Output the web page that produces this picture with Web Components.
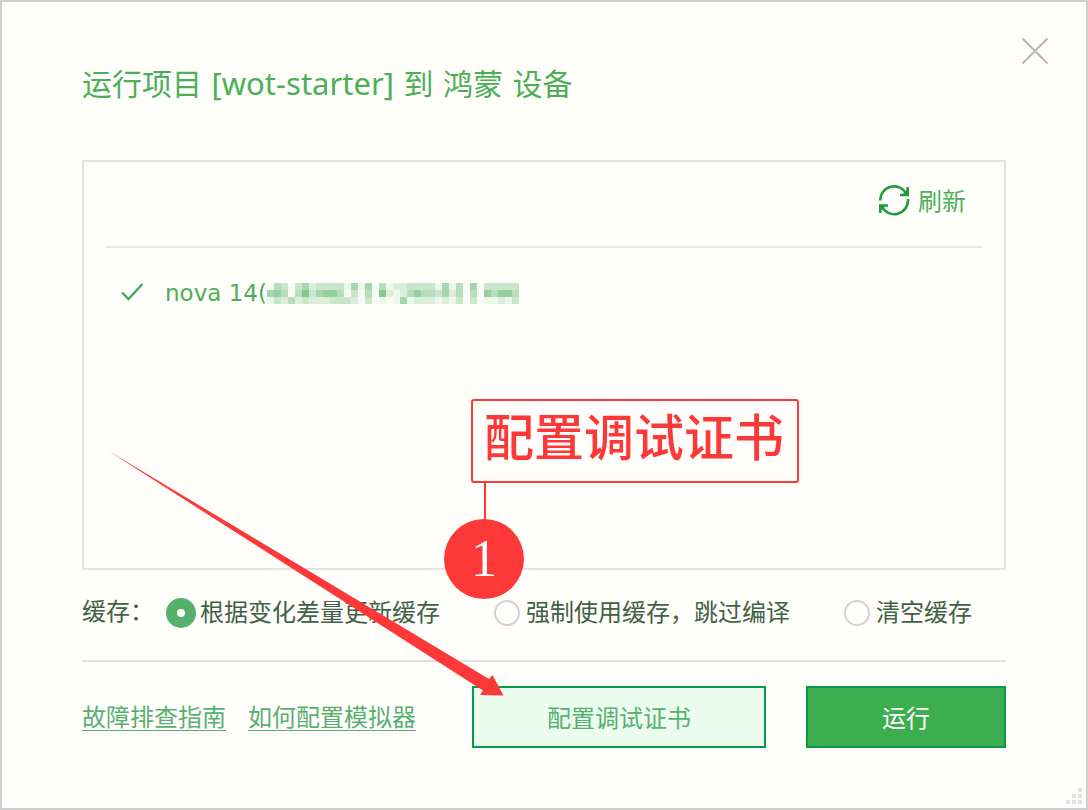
<!DOCTYPE html>
<html lang="zh-CN">
<head>
<meta charset="utf-8">
<title>运行项目</title>
<style>
  body {
    margin: 0;
    font-family: "DejaVu Sans", "Noto Sans CJK SC", sans-serif;
    font-size: 24px;
    color: #3f6145;
    --bg: #fffefa;
    --green: #4caf58;
    --link: #57b070;
    --line: #e3e3e6;
    --mark: #fc3938;
  }
  .name { font-family: "Noto Sans", sans-serif; font-size: 31px; }
</style>
</head>
<body>
<run-dialog>
  <span slot="title">运行项目 <span class="name">[wot-starter]</span> 到 鸿蒙 设备</span>
  <device-panel>
    <device-item>nova 14(</device-item>
  </device-panel>
  <cache-options></cache-options>
  <dialog-footer></dialog-footer>
</run-dialog>

<script>
const define = (name, html, setup) => {
  customElements.define(name, class extends HTMLElement {
    constructor() {
      super();
      const root = this.attachShadow({ mode: "open" });
      const template = document.createElement("template");
      template.innerHTML = html;
      root.append(template.content.cloneNode(true));
      if (setup) setup(root);
    }
  });
};

define("run-dialog", `
  <style>
    :host { display: flex; flex-direction: column; position: relative; box-sizing: border-box;
      min-height: 100vh; border: 2px solid #cfcfcf; background: var(--bg); overflow: hidden; }
    header { display: flex; justify-content: space-between; align-items: flex-start; padding: 34px 36px 54px 80px; }
    h1 { height: 44px; margin: 26px 0 0; font-size: 30px; line-height: 42px; font-weight: 400; color: var(--green); }
    ::slotted(span) { white-space: nowrap; }
    main { flex: 1; display: flex; flex-direction: column; padding: 0 80px 60px; }
    button { display: block; width: 30px; height: 30px; padding: 0; border: 0; background: none; }
    svg { display: block; }
    .grip { position: absolute; right: 4px; bottom: 4px; }
  </style>
  <header>
    <h1><slot name="title"></slot></h1>
    <button aria-label="关闭"><svg width="30" height="30" viewBox="0 0 30 30"><path d="M2.500 2.500 27.500 27.500M27.500 2.500 2.500 27.500" fill="none" stroke="#b3b3b3" stroke-width="1.800"/></svg></button>
  </header>
  <main><slot></slot></main>
  <svg class="grip" width="16" height="16" fill="#e2e2e2"><path d="M12 0h4v4h-4zM6 6h4v4H6zM12 6h4v4h-4zM0 12h4v4H0zM6 12h4v4H6zM12 12h4v4h-4z"/></svg>`);

define("device-panel", `
  <style>
    :host { flex: 1; display: flex; flex-direction: column; padding: 0 22px; border: 2px solid var(--line); }
    .bar { display: flex; justify-content: flex-end; padding: 18px 16px 26px; border-bottom: 2px solid #e8e8e8; }
    button { display: flex; align-items: center; gap: 8px; height: 40px; padding: 0; border: 0; background: none;
      font: inherit; color: var(--green); }
    button span { padding-bottom: 2px; }
  </style>
  <div class="bar">
    <button>
      <svg width="32" height="32" viewBox="0 0 32 32" fill="none" stroke="#1f9c3c" stroke-width="2.600">
        <path d="M2.200 16.500A13.900 13.900 0 0 1 28.500 10M30 15A13.900 13.900 0 0 1 3.500 22"/>
        <path d="M29.700 3v8H22M2.300 29v-7.500H10"/>
        <path d="M29 5.500v5h-4.500zM3 26.500v-4.500h4.500z" fill="#1f9c3c" stroke="none"/>
      </svg><span>刷新</span>
    </button>
  </div>
  <div><slot></slot></div>`);

define("device-item", `
  <style>
    :host { display: flex; align-items: center; height: 90px; padding-left: 13px;
      font-size: 23px; color: var(--green); }
    .tick { margin-right: 20px; }
    .mosaic { margin-top: 2px; }
  </style>
  <svg class="tick" width="26" height="26" viewBox="0 0 26 26"><path d="M3 12.500 9.500 19 23.500 4" fill="none" stroke="#41a866" stroke-width="2.400"/></svg>
  <slot></slot>
  <svg class="mosaic" width="252" height="22" shape-rendering="crispEdges" fill="#4caf60" role="img" aria-label="已隐藏"></svg>`,
  root => {
    // Opacity of each 7px tile of the hidden serial number, in tenths.
    const rows = [
      "043035233331515041223333151405033333",
      "564047356640304072124644352404064664",
      "132423222333203010151222121303011213"
    ];
    root.querySelector(".mosaic").innerHTML = rows.map((row, y) =>
      [...row].map((v, x) => `<rect x="${x * 7}" y="${y * 7}" width="7" height="7" opacity="${Math.max(v, 0.4) / 10}"/>`).join("")
    ).join("");
  });

define("cache-options", `
  <style>
    :host { display: block; border-bottom: 2px solid #e0e0e4; padding: 28px 0 32px; }
    fieldset { display: flex; align-items: center; margin: 0; padding: 0; border: 0; min-width: 0; height: 30px; white-space: nowrap; }
    .caption { margin-right: 12px; line-height: 28px; align-self: flex-start; }
    .choices { display: flex; gap: 52px; }
    label { display: flex; align-items: center; gap: 4px; line-height: 30px; }
    input { appearance: none; box-sizing: border-box; width: 26px; height: 26px; margin: 2px;
      border: 2px solid #d2d2d4; border-radius: 50%; }
    input:checked { width: 30px; height: 30px; margin: 0; border: 11px solid #54b06c; background: #fff; }
  </style>
  <fieldset aria-labelledby="caption">
    <span class="caption" id="caption">缓存：</span>
    <div class="choices">
      <label><input type="radio" name="cache" checked>根据变化差量更新缓存</label>
      <label><input type="radio" name="cache">强制使用缓存，跳过编译</label>
      <label><input type="radio" name="cache">清空缓存</label>
    </div>
  </fieldset>`);

define("dialog-footer", `
  <style>
    :host { display: flex; justify-content: space-between; align-items: center; padding-top: 24px; white-space: nowrap; }
    nav { display: flex; gap: 22px; }
    a { height: 27px; line-height: 30px; color: var(--link); text-decoration: none; border-bottom: 1px solid var(--link); }
    .actions { display: flex; gap: 40px; }
    .step { position: relative; }
    button { display: block; box-sizing: border-box; width: 200px; height: 62px; padding: 0 0 2px; font: inherit;
      color: #fff; background: #3cae50; border: 2px solid #079b48; }
    .step button { width: 294px; color: var(--link); background: #ebfcee; }
  </style>
  <nav><a href="#guide">故障排查指南</a><a href="#emulator">如何配置模拟器</a></nav>
  <div class="actions">
    <div class="step"><button>配置调试证书</button><step-callout>配置调试证书</step-callout></div>
    <button>运行</button>
  </div>`);

define("step-callout", `
  <style>
    /* The note floats above the button that it explains. */
    :host { position: absolute; left: -28px; bottom: 149px; color: var(--mark); pointer-events: none; }
    .note { box-sizing: border-box; width: 328px; height: 84px; margin-left: 27px; padding-left: 11px;
      border: 2px solid var(--mark); border-radius: 3px; font-size: 50px; font-weight: 500; line-height: 76px; }
    .stem { width: 2px; height: 37px; margin-left: 40px; background: var(--mark); }
    .badge { width: 80px; height: 80px; margin-top: -1px; border-radius: 50%; background: var(--mark); color: #fff;
      font: 52px/80px "Liberation Serif", serif; text-align: center; }
    .arrow { position: absolute; left: -337px; bottom: -97px; }
  </style>
  <div class="note"><slot></slot></div>
  <div class="stem"></div>
  <div class="badge">1</div>
  <svg class="arrow" width="397" height="246" viewBox="0 0 397 246"><path d="M0 0 382 229 385.500 225 396.500 245.500 373 245 376 240.500Z" fill="#fc3938"/></svg>`);
</script>
</body>
</html>
